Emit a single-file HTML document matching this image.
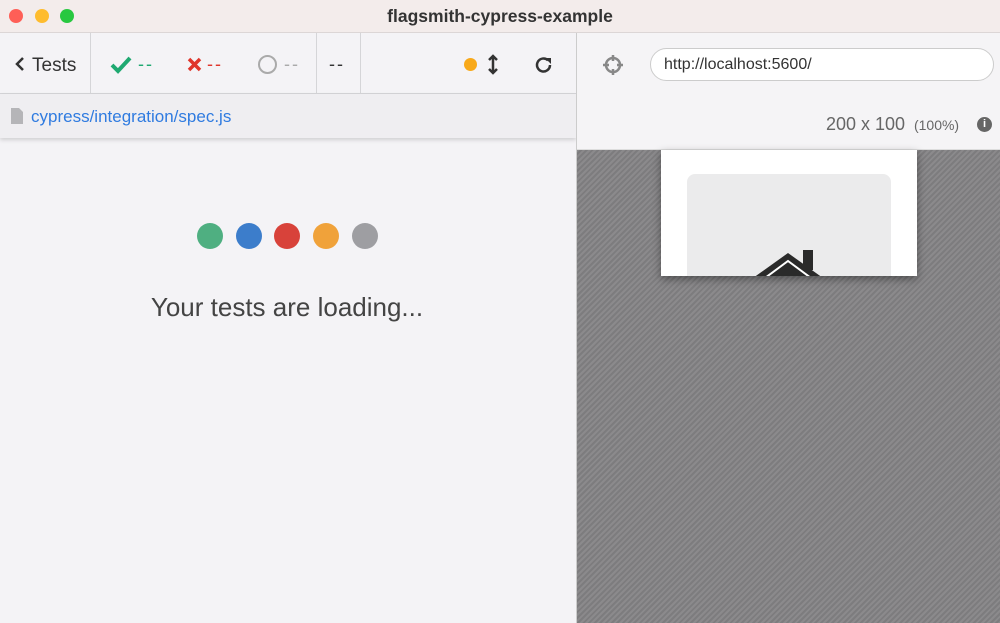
<!DOCTYPE html>
<html><head><style>
*{margin:0;padding:0;box-sizing:border-box}
body{width:1000px;height:623px;overflow:hidden;font-family:"Liberation Sans",sans-serif;background:#f4f3f6;position:relative}
.abs{position:absolute}
.title{left:0;top:0;width:1000px;height:33px;background:#f3eceb;border-bottom:1px solid #dcd6d6;text-align:center;font-weight:bold;font-size:17.5px;line-height:33px;color:#333}
.dot{width:14px;height:14px;border-radius:50%;top:9px}
.tool{left:0;top:33px;width:576px;height:61px;background:#f4f3f6;border-bottom:1px solid #d5d5d8}
.vsep{top:33px;width:1px;height:61px;background:#d5d5d8}
.spec{left:0;top:94px;width:576px;height:44px;background:#efeef1;box-shadow:0 2px 4px rgba(0,0,0,.15);font-size:17px;color:#2f7be0;line-height:46px;padding-left:31px}
.right{left:576px;top:33px;width:424px;height:590px;border-left:1px solid #ccc}
.rtop{left:577px;top:33px;width:423px;height:117px;background:#f5f4f6;border-bottom:1px solid #ddd}
.stripes{left:577px;top:150px;width:423px;height:473px;background:repeating-linear-gradient(135deg,#8b8a8c 0 2px,#7d7c7e 2px 4px)}
.c{width:26px;height:26px;border-radius:50%;top:223px}
.dash{font-size:18px;letter-spacing:2px}
</style></head><body>
<div class="abs title">flagsmith-cypress-example</div>
<div class="abs dot" style="left:9px;background:#fe5f57"></div>
<div class="abs dot" style="left:35px;background:#febc2e"></div>
<div class="abs dot" style="left:60px;background:#28c840"></div>

<div class="abs tool"></div>
<div class="abs vsep" style="left:90px"></div>
<div class="abs vsep" style="left:316px"></div>
<div class="abs vsep" style="left:360px"></div>
<svg class="abs" style="left:14px;top:56px" width="12" height="16"><path d="M9 2L3 8l6 6" stroke="#333" stroke-width="2.5" fill="none"/></svg>
<div class="abs" style="left:32px;top:55px;font-size:19px;color:#333">Tests</div>
<svg class="abs" style="left:110px;top:56px" width="22" height="18" viewBox="0 0 22 18"><path d="M2 9l6 6L20 2" stroke="#1fa971" stroke-width="4" fill="none"/></svg>
<div class="abs dash" style="left:138px;top:54px;color:#1fa971">--</div>
<svg class="abs" style="left:187px;top:57px" width="15" height="15"><path d="M2 2l11 11M13 2L2 13" stroke="#e0362c" stroke-width="3.5"/></svg>
<div class="abs dash" style="left:207px;top:54px;color:#e0362c">--</div>
<div class="abs" style="left:258px;top:55px;width:19px;height:19px;border:2.5px solid #aaa;border-radius:50%"></div>
<div class="abs dash" style="left:284px;top:54px;color:#aaa">--</div>
<div class="abs dash" style="left:329px;top:54px;color:#333">--</div>
<div class="abs" style="left:464px;top:58px;width:13px;height:13px;border-radius:50%;background:#f8a91a"></div>
<svg class="abs" style="left:487px;top:54px" width="12" height="21"><path d="M6 2v17M2 6l4-4 4 4M2 15l4 4 4-4" stroke="#333" stroke-width="2.5" fill="none"/></svg>
<svg class="abs" style="left:534px;top:55px" width="20" height="20" viewBox="0 0 20 20"><path d="M16 10a6.5 6.5 0 1 1-2-4.7" stroke="#333" stroke-width="2.5" fill="none"/><path d="M11 3h6v6z" fill="#333"/></svg>

<div class="abs spec">cypress/integration/spec.js</div>
<svg class="abs" style="left:11px;top:108px" width="12" height="16"><path d="M0 0h8l4 4v12H0z" fill="#b5b5b8"/></svg>

<div class="abs c" style="left:197px;background:#4faf81"></div>
<div class="abs c" style="left:236px;background:#3c7dcb"></div>
<div class="abs c" style="left:274px;background:#d8423a"></div>
<div class="abs c" style="left:313px;background:#f0a23a"></div>
<div class="abs c" style="left:352px;background:#9e9ea2"></div>
<div class="abs" style="left:0;top:292px;width:574px;text-align:center;font-size:26px;color:#444">Your tests are loading...</div>

<div class="abs right"></div>
<div class="abs rtop"></div>
<svg class="abs" style="left:602px;top:54px" width="22" height="22" viewBox="0 0 22 22"><circle cx="11" cy="11" r="7" stroke="#888" stroke-width="2.5" fill="none"/><path d="M11 1v6M11 15v6M1 11h6M15 11h6" stroke="#888" stroke-width="2.5"/></svg>
<div class="abs" style="left:650px;top:48px;width:344px;height:33px;border:1.5px solid #ccc;border-radius:17px;background:#fff;font-size:16px;line-height:31px;padding-left:13px;color:#333">http://localhost:5600/</div>
<div class="abs" style="left:826px;top:114px;font-size:18px;color:#666">200 x 100 <span style="font-size:14px">&nbsp;(100%)</span></div>
<div class="abs" style="left:977px;top:117px;width:15px;height:15px;border-radius:50%;background:#666;color:#fff;font-size:11px;font-weight:bold;text-align:center;line-height:15px">i</div>
<div class="abs stripes"></div>
<div class="abs" style="left:661px;top:150px;width:256px;height:126px;background:#fff;box-shadow:0 3px 8px rgba(0,0,0,.4);overflow:hidden">
 <div class="abs" style="left:26px;top:24px;width:204px;height:120px;background:#ebebec;border-radius:8px"></div>
 <svg class="abs" style="left:92px;top:98px" width="70" height="30"><path d="M0 30L35 5L70 30z" fill="#2a2a2a"/><rect x="50" y="2" width="10" height="20" fill="#2a2a2a"/><path d="M12 30L35 13L58 30" stroke="#fff" stroke-width="2" fill="none"/><path d="M17 30L35 17L53 30z" fill="#2a2a2a"/></svg>
</div>
</body></html>
